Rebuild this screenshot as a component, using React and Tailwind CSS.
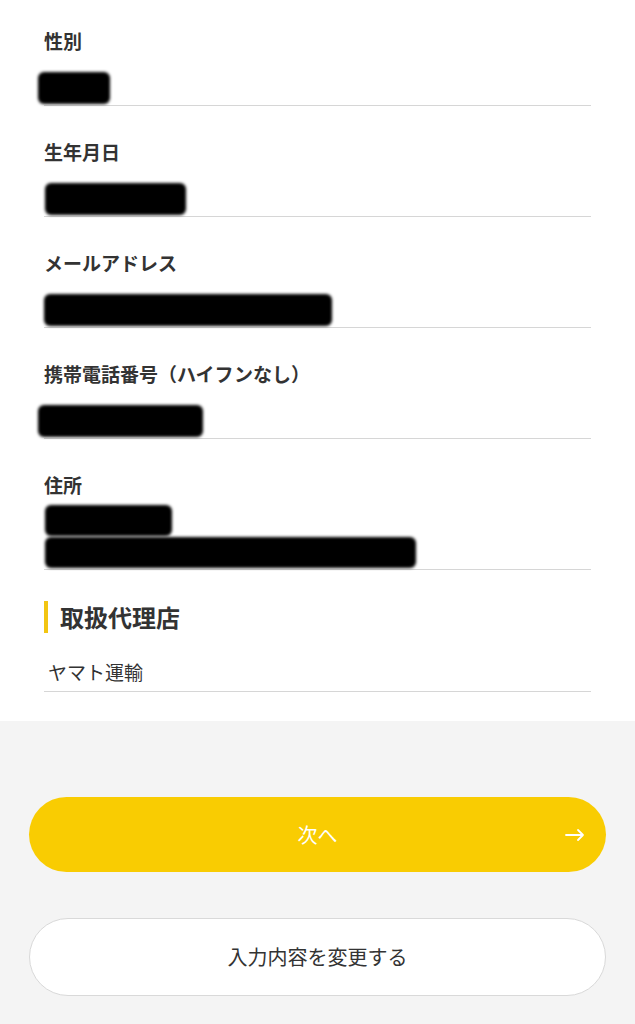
import React from "react";

const font = { fontFamily: '"Noto Sans CJK JP", "Noto Sans", sans-serif' };

function Redacted({ w, ml = 0, h = 32 }) {
  return (
    <div
      className="bg-black rounded-[6px] blur-[1.5px]"
      style={{ width: w, height: h, marginLeft: ml }}
    />
  );
}

function Field({ label, children, first }) {
  return (
    <div className={first ? "" : "mt-[33px]"}>
      <p className="text-[19px] leading-[26px] font-bold text-[#333]">{label}</p>
      <div className="mt-[14px] h-[38px] border-b border-[#d6d6d6] flex items-end pb-[1px]">
        {children}
      </div>
    </div>
  );
}

export default function App() {
  return (
    <div className="w-[635px] h-[1024px] bg-[#f4f4f4] overflow-hidden" style={font}>
      <div className="bg-white px-[44px] pt-[28px] pb-[29px]">
        <Field label="性別" first>
          <Redacted w={72} ml={-6} />
        </Field>
        <Field label="生年月日">
          <Redacted w={141} ml={1} />
        </Field>
        <Field label="メールアドレス">
          <Redacted w={288} />
        </Field>
        <Field label="携帯電話番号（ハイフンなし）">
          <Redacted w={165} ml={-6} />
        </Field>

        <div className="mt-[33px]">
          <p className="text-[19px] leading-[26px] font-bold text-[#333]">住所</p>
          <div className="mt-[7px] border-b border-[#d6d6d6] flex flex-col gap-[1px] pb-[1px]">
            <Redacted w={127} ml={1} h={31} />
            <Redacted w={371} ml={1} h={31} />
          </div>
        </div>

        <div className="mt-[31px] flex items-center h-[32px]">
          <div className="w-[4px] h-[32px] bg-[#f2c512]" />
          <h2 className="ml-[12px] text-[24px] font-bold text-[#333] leading-none">取扱代理店</h2>
        </div>

        <div className="mt-[26px] h-[33px] border-b border-[#d6d6d6] pl-[4px]">
          <p className="text-[19px] leading-[26px] text-[#333]">ヤマト運輸</p>
        </div>
      </div>

      <div className="px-[29px] pt-[76px]">
        <button className="relative w-full h-[75px] rounded-full bg-[#f9cc02] text-white text-[20px] flex items-center justify-center">
          <span>次へ</span>
          <span className="absolute right-[21px] top-1/2 -translate-y-1/2">
            <svg width="20" height="14" viewBox="0 0 20 14" fill="none" stroke="white" strokeWidth="1.8" strokeLinecap="round" strokeLinejoin="round">
              <path d="M1 7h17M13 2l5 5-5 5" />
            </svg>
          </span>
        </button>

        <button className="mt-[46px] w-full h-[78px] rounded-full bg-white border border-[#d9d9d9] text-[#333] text-[20px] flex items-center justify-center">
          入力内容を変更する
        </button>
      </div>
    </div>
  );
}
